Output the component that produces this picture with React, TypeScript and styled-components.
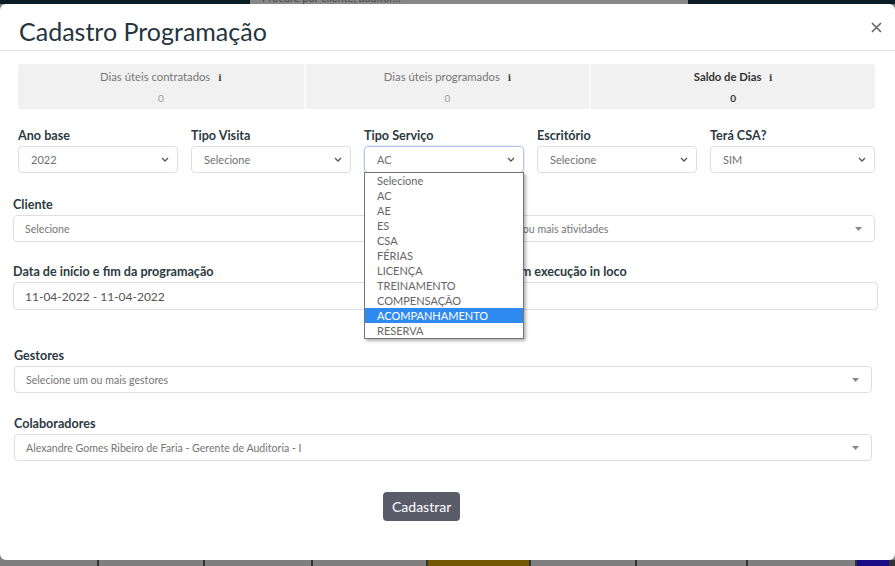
import React from 'react';
import styled, { createGlobalStyle, css } from 'styled-components';

const GlobalStyle = createGlobalStyle`
    html, body {
        margin: 0;
        padding: 0;
    }
    body {
        background: #7f7f7f;
        font-family: Lato, "Open Sans", sans-serif;
    }
`;

const servicos = [
    'Selecione',
    'AC',
    'AE',
    'ES',
    'CSA',
    'FÉRIAS',
    'LICENÇA',
    'TREINAMENTO',
    'COMPENSAÇÃO',
    'ACOMPANHAMENTO',
    'RESERVA',
];

const tableCells = [
    { w: 97, c: '#7f7f7f' },
    { w: 104, c: '#7f7f7f' },
    { w: 106, c: '#7f7f7f' },
    { w: 113, c: '#7f7f7f' },
    { w: 101, c: '#725600' },
    { w: 104, c: '#7f7f7f' },
    { w: 109, c: '#7f7f7f' },
    { w: 107, c: '#7f7f7f' },
    { w: 32, c: '#1b0c86' },
];

function Chevron() {
    return (
        <svg width="8" height="5" viewBox="0 0 8 5">
            <path d="M1 1l3 3 3-3" fill="none" stroke="#555" strokeWidth="1.3" />
        </svg>
    );
}

function Caret() {
    return (
        <svg width="7" height="4" viewBox="0 0 7 4">
            <polygon points="0,0 7,0 3.5,4" fill="#888" />
        </svg>
    );
}

function CloseIcon() {
    return (
        <svg width="11" height="11" viewBox="0 0 11 11">
            <path d="M1 1l9 9M10 1l-9 9" stroke="#666" strokeWidth="1.6" />
        </svg>
    );
}

function App() {
    return (
        <Page>
            <GlobalStyle />
            <TopBar>
                <SearchBox>
                    <SearchText>Procure por cliente, auditor...</SearchText>
                </SearchBox>
            </TopBar>

            <Modal>
                <Header>
                    <Title>Cadastro Programação</Title>
                    <CloseButton>
                        <CloseIcon />
                    </CloseButton>
                </Header>

                <Body>
                    <Stats>
                        <Stat>
                            <StatLabel>
                                Dias úteis contratados <Info>i</Info>
                            </StatLabel>
                            <StatValue>0</StatValue>
                        </Stat>
                        <Stat>
                            <StatLabel>
                                Dias úteis programados <Info>i</Info>
                            </StatLabel>
                            <StatValue>0</StatValue>
                        </Stat>
                        <Stat>
                            <StatLabel $strong>
                                Saldo de Dias <Info>i</Info>
                            </StatLabel>
                            <StatValue $strong>0</StatValue>
                        </Stat>
                    </Stats>

                    <SelectRow>
                        <Field>
                            <Label>Ano base</Label>
                            <Select>
                                <span>2022</span>
                                <Chevron />
                            </Select>
                        </Field>
                        <Field>
                            <Label>Tipo Visita</Label>
                            <Select>
                                <span>Selecione</span>
                                <Chevron />
                            </Select>
                        </Field>
                        <Field>
                            <Label>Tipo Serviço</Label>
                            <Select $focused>
                                <span>AC</span>
                                <Chevron />
                                <OptionList>
                                    {servicos.map((s) => (
                                        <Option key={s} $active={s === 'ACOMPANHAMENTO'}>
                                            {s}
                                        </Option>
                                    ))}
                                </OptionList>
                            </Select>
                        </Field>
                        <Field>
                            <Label>Escritório</Label>
                            <Select>
                                <span>Selecione</span>
                                <Chevron />
                            </Select>
                        </Field>
                        <Field>
                            <Label>Terá CSA?</Label>
                            <Select>
                                <span>SIM</span>
                                <Chevron />
                            </Select>
                        </Field>
                    </SelectRow>

                    <HalfRow $mt={24} $cols="428px 1fr" $gap={0} $mr={3}>
                        <Field>
                            <Label>Cliente</Label>
                            <Input>Selecione</Input>
                        </Field>
                        <Field>
                            <Label>Atividades</Label>
                            <Input>
                                <span>Selecione uma ou mais atividades</span>
                                <Caret />
                            </Input>
                        </Field>
                    </HalfRow>

                    <HalfRow $mt={22} $cols="430px 1fr" $gap={13} $mr={0}>
                        <Field>
                            <Label>Data de início e fim da programação</Label>
                            <Input $tall $dark>11-04-2022 - 11-04-2022</Input>
                        </Field>
                        <Field>
                            <Label>Dias úteis em execução in loco</Label>
                            <Input $tall />
                        </Field>
                    </HalfRow>

                    <FullRow $mt={38}>
                        <Label>Gestores</Label>
                        <Input>
                            <span>Selecione um ou mais gestores</span>
                            <Caret />
                        </Input>
                    </FullRow>

                    <FullRow $mt={23}>
                        <Label>Colaboradores</Label>
                        <Input>
                            <span>Alexandre Gomes Ribeiro de Faria - Gerente de Auditoria - I</span>
                            <Caret />
                        </Input>
                    </FullRow>

                    <Footer>
                        <SubmitButton>Cadastrar</SubmitButton>
                    </Footer>
                </Body>
            </Modal>

            <TableStrip>
                {tableCells.map((cell, i) => (
                    <TableCell key={i} $w={cell.w} $c={cell.c} />
                ))}
            </TableStrip>
        </Page>
    );
}

const Page = styled.div`
    width: 895px;
    height: 566px;
    display: flex;
    flex-direction: column;
    overflow: hidden;
`;

const TopBar = styled.div`
    flex-shrink: 0;
    height: 4px;
    display: flex;
    background: #0c1c26;
`;

const SearchBox = styled.div`
    margin-left: 250px;
    width: 438px;
    background: #878787;
    overflow: hidden;
`;

const SearchText = styled.div`
    margin-top: -8px;
    padding-left: 12px;
    font-size: 11px;
    line-height: 12px;
    color: #4a4a4a;
`;

const Modal = styled.div`
    flex: 1;
    display: flex;
    flex-direction: column;
    background: #ffffff;
    border-radius: 6px;
`;

const Header = styled.div`
    height: 46px;
    display: flex;
    align-items: center;
    justify-content: space-between;
    padding: 0 13px 0 19px;
    border-bottom: 1px solid #e6e6e6;
`;

const Title = styled.h1`
    margin: 0;
    padding-top: 7px;
    font-size: 25px;
    font-weight: 400;
    line-height: 30px;
    color: #253640;
`;

const CloseButton = styled.div`
    display: flex;
    padding-top: 1px;
`;

const Body = styled.div`
    padding: 13px 17px 0 13px;
    display: flex;
    flex-direction: column;
`;

const Stats = styled.div`
    margin: 0 3px 0 5px;
    height: 45px;
    display: grid;
    grid-template-columns: repeat(3, 1fr);
    background: #f1f1f1;
    border-radius: 3px;
`;

const Stat = styled.div`
    display: flex;
    flex-direction: column;
    align-items: center;
    padding-top: 5px;
    gap: 5px;

    & + & {
        border-left: 2px solid #fafafa;
    }
`;

const StatLabel = styled.div<{ $strong?: boolean }>`
    font-size: 11.3px;
    line-height: 15px;
    color: #777;
    ${(p) =>
        p.$strong &&
        css`
            font-weight: 700;
            color: #333;
        `}
`;

const StatValue = styled.div<{ $strong?: boolean }>`
    font-size: 10px;
    line-height: 15px;
    color: #9a9a9a;
    ${(p) =>
        p.$strong &&
        css`
            font-weight: 700;
            color: #333;
        `}
`;

const Info = styled.span`
    margin-left: 5px;
    font-family: "DejaVu Serif", serif;
    font-weight: 700;
    font-size: 9px;
    color: #444;
`;

const SelectRow = styled.div`
    margin: 19px 3px 0 5px;
    display: grid;
    grid-template-columns: repeat(4, 160px) 1fr;
    gap: 13px;
`;

const HalfRow = styled.div<{ $mt: number; $cols: string; $gap: number; $mr: number }>`
    margin: ${(p) => p.$mt}px ${(p) => p.$mr}px 0 0;
    display: grid;
    grid-template-columns: ${(p) => p.$cols};
    gap: ${(p) => p.$gap}px;
`;

const FullRow = styled.div<{ $mt: number }>`
    margin: ${(p) => p.$mt}px 6px 0 1px;
    display: flex;
    flex-direction: column;
`;

const Field = styled.div`
    display: flex;
    flex-direction: column;
    min-width: 0;
`;

const Label = styled.label`
    margin-bottom: 2px;
    font-size: 12.6px;
    font-weight: 700;
    line-height: 16px;
    color: #2b3a42;
    white-space: nowrap;
`;

const Select = styled.div<{ $focused?: boolean }>`
    position: relative;
    height: 27px;
    box-sizing: border-box;
    display: flex;
    align-items: center;
    justify-content: space-between;
    padding: 0 8px 0 12px;
    border: 1px solid #dedede;
    border-radius: 4px;
    font-size: 11px;
    color: #6f6f6f;

    ${(p) =>
        p.$focused &&
        css`
            border-color: #b3c4ec;
            box-shadow: 0 0 0 1px rgba(140, 165, 230, 0.18);
        `}
`;

const OptionList = styled.div`
    position: absolute;
    top: 100%;
    left: -1px;
    right: -1px;
    z-index: 5;
    display: flex;
    flex-direction: column;
    background: #ffffff;
    border: 1px solid #767676;
    box-shadow: 2px 2px 3px rgba(0, 0, 0, 0.3);
`;

const Option = styled.div<{ $active?: boolean }>`
    height: 15px;
    line-height: 15px;
    padding-left: 12px;
    font-size: 11px;
    color: #666;

    ${(p) =>
        p.$active &&
        css`
            background: #2f8af0;
            color: #ffffff;
        `}
`;

const Input = styled.div<{ $tall?: boolean; $dark?: boolean }>`
    height: ${(p) => (p.$tall ? 28 : 27)}px;
    box-sizing: border-box;
    display: flex;
    align-items: center;
    justify-content: space-between;
    padding: 0 12px 0 11px;
    border: 1px solid #dedede;
    border-radius: 4px;
    font-size: ${(p) => (p.$dark ? 12 : 10.6)}px;
    color: ${(p) => (p.$dark ? '#555' : '#757575')};
    white-space: nowrap;
`;

const Footer = styled.div`
    margin-top: 31px;
    padding-left: 370px;
    display: flex;
`;

const SubmitButton = styled.button`
    height: 29px;
    padding: 0 9px;
    border: none;
    border-radius: 4px;
    background: #5b5c6a;
    color: #ffffff;
    font-family: Lato, "Open Sans", sans-serif;
    font-size: 14px;
`;

const TableStrip = styled.div`
    flex-shrink: 0;
    height: 6px;
    display: flex;
    gap: 2px;
    background: #333;
`;

const TableCell = styled.div<{ $w: number; $c: string }>`
    width: ${(p) => p.$w}px;
    flex-shrink: 0;
    background: ${(p) => p.$c};
`;

export default App;
